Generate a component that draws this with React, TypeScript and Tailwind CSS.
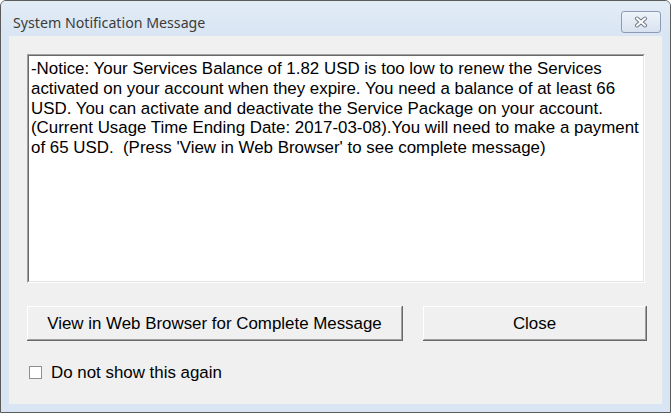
import React from "react";

const lines = [
  "-Notice: Your Services Balance of 1.82 USD is too low to renew the Services",
  "activated on your account when they expire. You need a balance of at least 66",
  "USD. You can activate and deactivate the Service Package on your account.",
  "(Current Usage Time Ending Date: 2017-03-08).You will need to make a payment",
  "of 65 USD.  (Press 'View in Web Browser' to see complete message)",
];

// classic raised 3D button edges
const Button: React.FC<{ w: string; children: React.ReactNode }> = ({ w, children }) => (
  <div
    className={`${w} h-[35px] border-r border-b border-[#696969] bg-[#f0f0f0] font-['Liberation_Sans',Arial,sans-serif] text-[16.9px] text-black`}
  >
    <div className="h-full w-full border-t border-l border-white border-r border-b border-r-[#a0a0a0] border-b-[#a0a0a0] flex items-center justify-center pt-[1px]">
      {children}
    </div>
  </div>
);

const CloseX: React.FC = () => (
  <svg width="14" height="12" viewBox="0 0 14 12" aria-hidden="true">
    <path d="M3 2.5 L11 9.5 M11 2.5 L3 9.5" stroke="#6b7280" strokeWidth="4" strokeLinecap="round" />
    <path d="M3 2.5 L11 9.5 M11 2.5 L3 9.5" stroke="#ffffff" strokeWidth="2.2" strokeLinecap="round" />
  </svg>
);

export default function App() {
  return (
    <div className="w-[671px] h-[413px] bg-white">
      <div className="h-full flex flex-col rounded-t-[6px] border border-[#5b5b5b] bg-[#d9e5f3]">
        {/* title bar */}
        <div className="h-[35px] flex items-start justify-between pl-[12px] pr-[9px] rounded-t-[5px] bg-gradient-to-b from-[#e2ecf7] to-[#d9e5f3]">
          <span className="mt-[13px] font-['Noto_Sans','Open_Sans',sans-serif] text-[14.2px] leading-[18px] text-[#3c3c3c]">
            System Notification Message
          </span>
          <div className="mt-[10px] w-[40px] h-[22px] rounded-[3px] border border-[#8e9cb3] bg-gradient-to-b from-[#eef3fa] to-[#d8e2ef] flex items-center justify-center">
            <CloseX />
          </div>
        </div>

        {/* client area */}
        <div className="flex-1 mx-[8px] mb-[8px] bg-[#f0f0f0] pt-[18px] pl-[18px] flex flex-col">
          <div className="w-[618px] h-[229px] border-t border-l border-[#a0a0a0] border-r border-b border-r-white border-b-white">
            <div className="h-full w-full border-t border-l border-[#696969] border-r border-b border-r-[#e3e3e3] border-b-[#e3e3e3] bg-white px-[2px] pt-[3px]">
              <p className="font-['Liberation_Sans',Arial,sans-serif] text-[16.9px] leading-[19.75px] text-black whitespace-pre">
                {lines.map((l, i) => (
                  <React.Fragment key={i}>
                    {l}
                    {i < lines.length - 1 && <br />}
                  </React.Fragment>
                ))}
              </p>
            </div>
          </div>

          <div className="mt-[23px] flex gap-[20px]">
            <Button w="w-[376px]">View in Web Browser for Complete Message</Button>
            <Button w="w-[224px]">Close</Button>
          </div>

          <label className="mt-[19px] ml-[2px] flex items-center gap-[9px] font-['Liberation_Sans',Arial,sans-serif] text-[16.9px] text-black">
            <span className="w-[13px] h-[13px] border border-[#8f8f8f] bg-white" />
            Do not show this again
          </label>
        </div>
      </div>
    </div>
  );
}
